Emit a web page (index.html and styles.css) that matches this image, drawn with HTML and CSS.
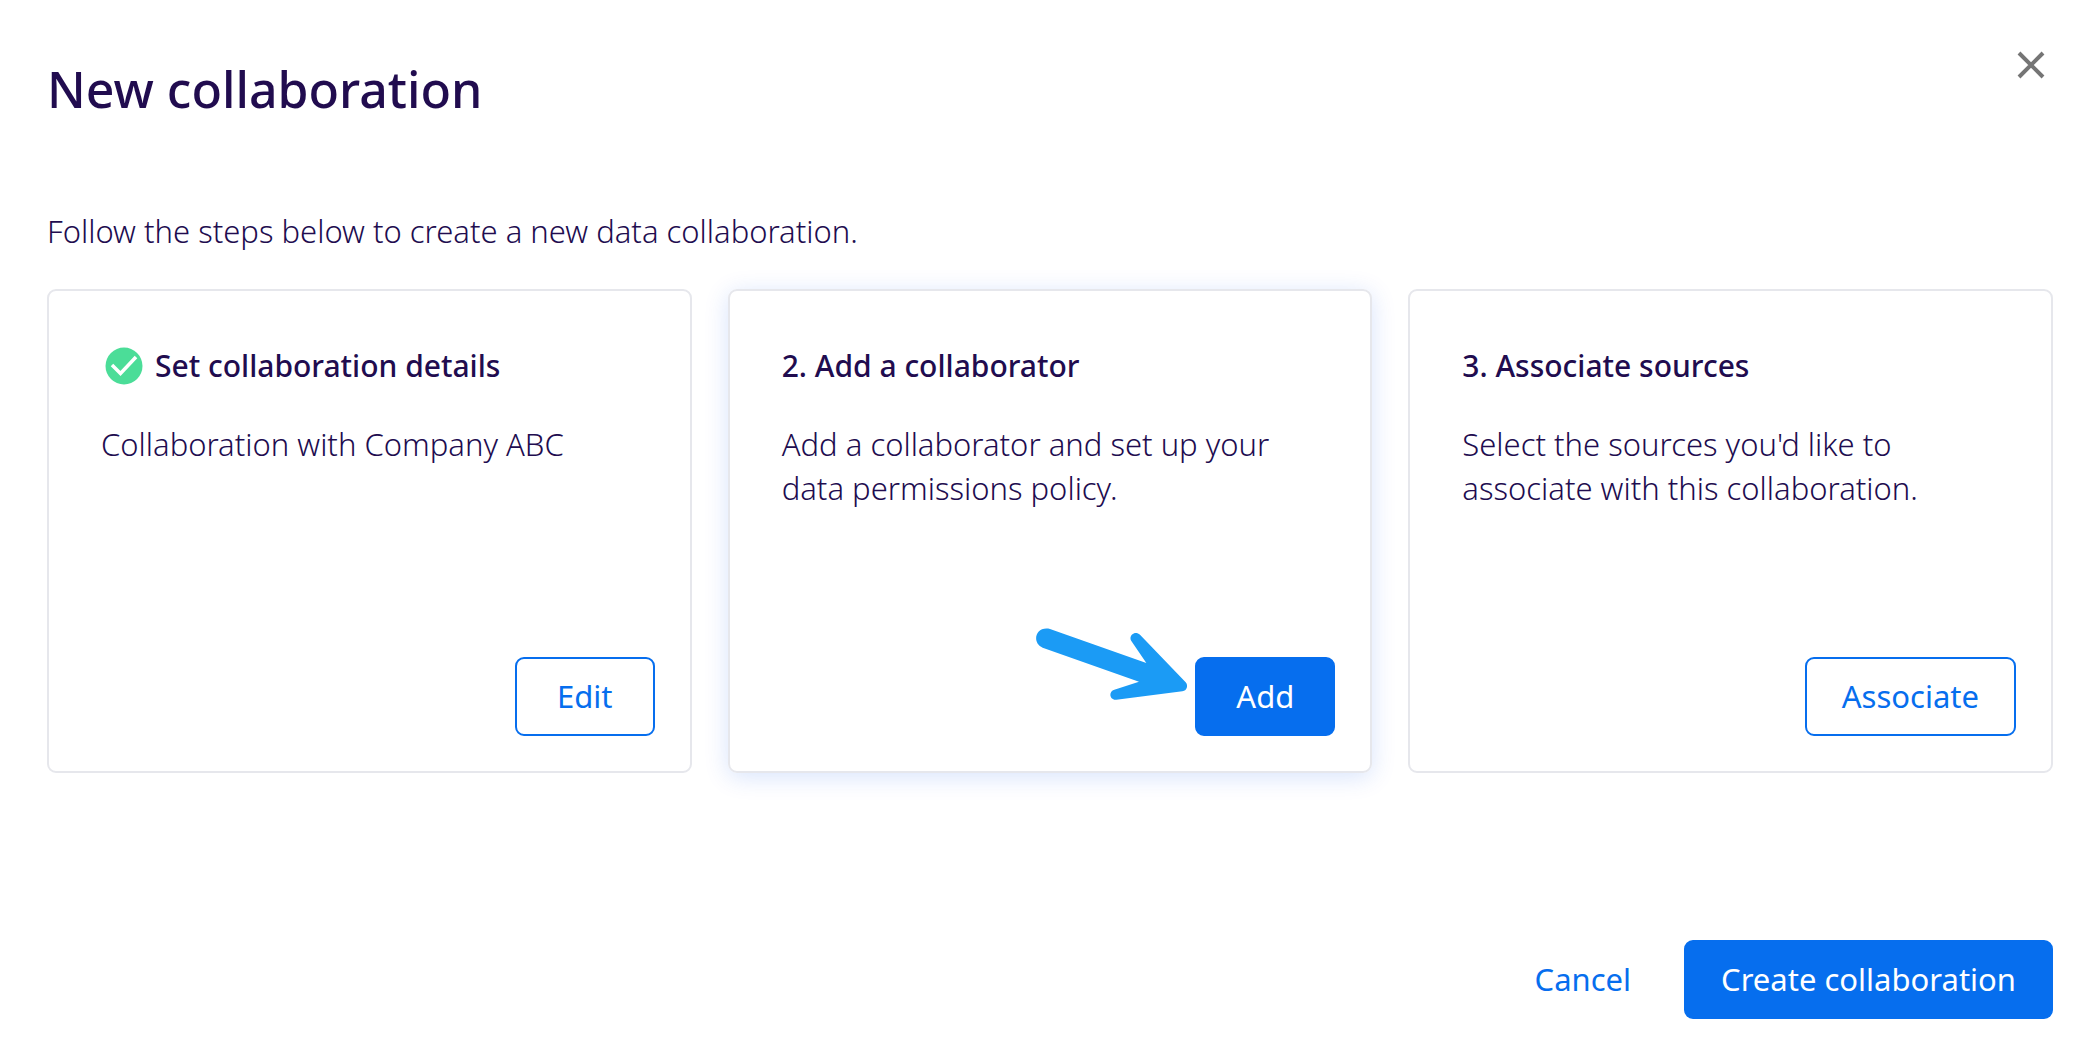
FILE: index.html
```html
<!DOCTYPE html>
<html lang="en">
<head>
    <meta charset="utf-8">
    <title>New collaboration</title>
    <link rel="stylesheet" href="styles.css">
</head>
<body>
<main class="dialog">
    <header class="dialog-header">
        <h1>New collaboration</h1>
        <button type="button" class="close" aria-label="Close">
            <svg width="28" height="28" viewBox="0 0 28 28"><path d="M2 2 L26 26 M26 2 L2 26" stroke="#757575" stroke-width="4"/></svg>
        </button>
    </header>
    <p class="intro">Follow the steps below to create a new data collaboration.</p>
    <div class="steps">
        <section class="card">
            <h2>
                <svg class="check" width="38" height="38" viewBox="0 0 38 38"><circle cx="19" cy="19" r="18.500" fill="#4bdd98"/><path d="M7 18 L15.500 26.500 L31 10" fill="none" stroke="#fff" stroke-width="3.500"/></svg>
                Set collaboration details
            </h2>
            <p>Collaboration with Company ABC</p>
            <div class="card-action">
                <button type="button" class="btn">Edit</button>
            </div>
        </section>
        <section class="card active">
            <h2>2. Add a collaborator</h2>
            <p>Add a collaborator and set up your data permissions policy.</p>
            <div class="card-action">
                <svg class="arrow" width="151" height="72" viewBox="78 83 453 216"><path fill="#1b9bf5" d="M120 86 L409 188 L364 122 C354 106 375 89 390 103 L527 246 C536 256 530 272 517 273 L319 298 C299 300 294 274 313 268 L387 244 L98 142 C64 128 76 76 120 86 Z"/></svg>
                <button type="button" class="btn primary">Add</button>
            </div>
        </section>
        <section class="card">
            <h2>3. Associate sources</h2>
            <p>Select the sources you'd like to associate with this collaboration.</p>
            <div class="card-action">
                <button type="button" class="btn">Associate</button>
            </div>
        </section>
    </div>
    <footer class="dialog-footer">
        <button type="button" class="btn link">Cancel</button>
        <button type="button" class="btn primary">Create collaboration</button>
    </footer>
</main>
</body>
</html>
```
FILE: styles.css
```css
* {
    box-sizing: border-box;
}
body {
    margin: 0;
    background: #fff;
    color: #210c4f;
    font-family: 'Noto Sans', 'Open Sans', sans-serif;
    font-size: 31px;
    font-weight: 300;
    line-height: 44px;
}
h1, h2, p {
    margin: 0;
}
.dialog {
    padding: 44px 35px 40px 47px;
}
.dialog-header {
    display: flex;
    justify-content: space-between;
    align-items: flex-start;
}
h1, h2 {
    font-weight: 500;
}
h1 {
    font-size: 50px;
    line-height: 90px;
}
.close {
    display: flex;
    padding: 7px 8px;
    border: 0;
    background: none;
    cursor: pointer;
}
.intro {
    margin-top: 75px;
}
.steps {
    display: grid;
    grid-template-columns: repeat(3, 1fr);
    gap: 36px;
    margin-top: 36px;
}
.card {
    display: flex;
    flex-direction: column;
    min-height: 484px;
    padding: 53px 35px 35px 52px;
    border: 2px solid #e6e7ec;
    border-radius: 9px;
}
.card.active {
    box-shadow: 0 4px 24px rgba(6, 80, 238, 0.16);
}
h2 {
    display: flex;
    align-items: center;
    font-size: 30px;
    line-height: 44px;
}
.check {
    margin: 0 12px 0 4px;
}
.card p {
    margin-top: 34px;
    padding-right: 40px;
}
.card-action {
    position: relative;
    margin-top: auto;
    margin-left: auto;
}
.arrow {
    position: absolute;
    top: -29px;
    right: calc(100% + 8px);
}
.btn {
    display: block;
    min-width: 140px;
    height: 79px;
    padding: 0 35px 2px;
    border: 2px solid #066eee;
    border-radius: 9px;
    background: #fff;
    color: #066eee;
    font-family: inherit;
    font-size: 31px;
    font-weight: 400;
    cursor: pointer;
}
.btn.primary {
    background: #066eee;
    color: #fff;
}
.btn.link {
    border-color: transparent;
    background: none;
}
.dialog-footer {
    display: flex;
    justify-content: flex-end;
    gap: 16px;
    margin-top: 167px;
}
```
